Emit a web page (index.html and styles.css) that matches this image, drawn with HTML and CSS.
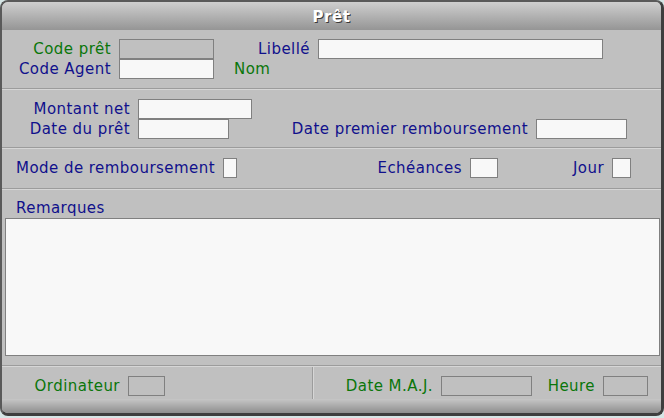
FILE: index.html
```html
<!DOCTYPE html>
<html>
    <head>
        <title>Prêt</title>
        <meta charset="utf-8">
        <link rel="stylesheet" href="styles.css">
    </head>
    <body>
        <div class="window">
            <div class="titlebar">Prêt</div>

            <div class="section sec1">
                <div class="row">
                    <span class="lbl green w109">Code prêt</span>
                    <span class="fld off w95"></span>
                    <span class="lbl w96">Libellé</span>
                    <span class="fld w285"></span>
                </div>
                <div class="row">
                    <span class="lbl w109">Code Agent</span>
                    <span class="fld w95"></span>
                    <span class="plain green">Nom</span>
                </div>
            </div>

            <div class="section sec2">
                <div class="row">
                    <span class="lbl w128">Montant net</span>
                    <span class="fld w114"></span>
                </div>
                <div class="row">
                    <span class="lbl w128">Date du prêt</span>
                    <span class="fld w91"></span>
                    <span class="lbl w299">Date premier remboursement</span>
                    <span class="fld w91"></span>
                </div>
            </div>

            <div class="section sec3">
                <div class="row">
                    <span class="lbl w213">Mode de remboursement</span>
                    <span class="fld w14"></span>
                    <span class="lbl w225">Echéances</span>
                    <span class="fld w28"></span>
                    <span class="lbl w106">Jour</span>
                    <span class="fld w19"></span>
                </div>
            </div>

            <div class="section sec4">
                <div class="caption">Remarques</div>
                <div class="memo"></div>
            </div>

            <div class="footer">
                <div class="cell left">
                    <span class="lbl green w118">Ordinateur</span>
                    <span class="fld off w37"></span>
                </div>
                <div class="cell right">
                    <span class="lbl green w119">Date M.A.J.</span>
                    <span class="fld off w91"></span>
                    <span class="lbl green w63">Heure</span>
                    <span class="fld off w45"></span>
                </div>
            </div>

            <div class="bottombar"></div>
        </div>
    </body>
</html>
```

FILE: styles.css
```css
body{
    margin: 0;
    background-color: #d6e6e6;
    font-family: "DejaVu Sans", Verdana, sans-serif;
    font-size: 15px;
    letter-spacing: 0.45px;
}

div.window{
    width: 659px;
    height: 411px;
    border: 2px solid #5a5a5a;
    border-right: 3px solid #3e3e3e;
    border-bottom: 3px solid #3e3e3e;
    border-radius: 8px;
    overflow: hidden;
    background-color: #c0c0c0;
    display: flex;
    flex-direction: column;
}

div.titlebar{
    height: 28px;
    line-height: 30px;
    text-align: center;
    font-weight: bold;
    font-size: 15px;
    letter-spacing: 0.6px;
    color: #ffffff;
    text-shadow: 1px 1px 0 #3a3a3a;
    background: linear-gradient(#cfcfcf, #959595);
}

div.section{
    border-bottom: 1px solid #9c9c9c;
    box-shadow: 0 1px 0 #d6d6d6;
    margin-bottom: 1px;
}
div.sec1{ padding: 9px 0 9px 0; height: 40px; }
div.sec2{ padding: 9px 0 8px 0; height: 40px; }
div.sec3{ padding: 9px 0 10px 0; height: 20px; }
div.sec4{ padding: 9px 0 9px 0; height: 157px; }

div.row{
    display: flex;
    align-items: center;
    height: 20px;
}

span.lbl{
    display: inline-block;
    text-align: right;
    padding-right: 8px;
    color: #10108c;
    white-space: nowrap;
    line-height: 21px;
}
span.plain{ margin-left: 20px; line-height: 21px; }
.green{ color: #0a760a !important; }

span.fld{
    display: inline-block;
    height: 20px;
    box-sizing: border-box;
    border: 1px solid #808080;
    background-color: #f8f8f8;
}
span.fld.off{ background-color: #c0c0c0; }

div.caption{
    padding-left: 14px;
    height: 16px;
    line-height: 18px;
    color: #10108c;
}
div.memo{
    margin: 3px 0 0 3px;
    width: 655px;
    height: 138px;
    box-sizing: border-box;
    border: 1px solid #808080;
    background-color: #f8f8f8;
}

div.footer{
    height: 32px;
    display: flex;
}
div.cell{
    display: flex;
    align-items: flex-start;
    padding-top: 9px;
}
div.cell.left{
    width: 310px;
    border-right: 1px solid #9c9c9c;
    box-shadow: 1px 0 0 #d6d6d6;
}
div.cell.right{ margin-left: 1px; }

div.bottombar{
    height: 14px;
    background: linear-gradient(#c6c6c6, #8e8e8e);
}

/* largeurs */
.w14{ width: 14px; } .w19{ width: 19px; } .w28{ width: 28px; }
.w37{ width: 37px; } .w45{ width: 45px; } .w63{ width: 63px; }
.w91{ width: 91px; } .w95{ width: 95px; } .w96{ width: 96px; }
.w106{ width: 106px; } .w109{ width: 109px; } .w114{ width: 114px; }
.w118{ width: 118px; } .w119{ width: 119px; } .w128{ width: 128px; }
.w213{ width: 213px; } .w225{ width: 225px; } .w285{ width: 285px; }
.w299{ width: 299px; }
```
